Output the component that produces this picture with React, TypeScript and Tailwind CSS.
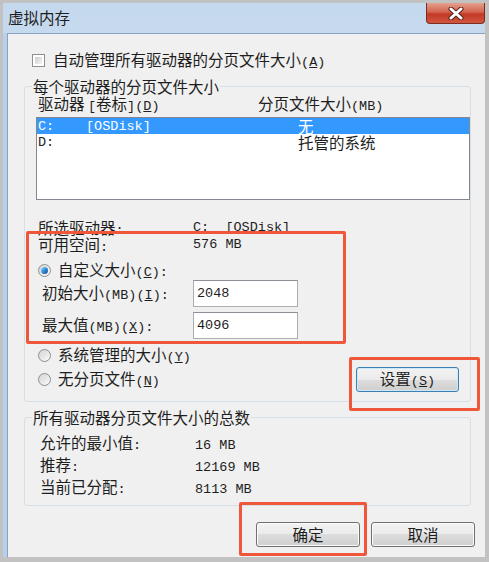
import type { ReactNode } from 'react';

// half-width run, like SimSun's ascii
const M = ({ children }: { children: ReactNode }) => (
  <span className="font-['Liberation_Mono',monospace] text-[13.5px]">{children}</span>
);

const Radio = ({ checked }: { checked?: boolean }) => (
  <span className="w-[13px] h-[13px] shrink-0 rounded-full border border-[#8e8f8f] bg-linear-to-br from-[#d4d4d4] to-[#fbfbfb] flex items-center justify-center">
    {checked && <span className="w-[7px] h-[7px] rounded-full bg-linear-to-br from-[#9adcff] via-[#2f8ad8] to-[#134f8f]" />}
  </span>
);

const Checkbox = () => (
  <span className="w-[13px] h-[13px] shrink-0 border border-[#8e8f8f] bg-white p-[2px]">
    <span className="block w-full h-full bg-linear-to-br from-[#cbcbcb] to-[#f6f6f6]" />
  </span>
);

const Btn = ({ children, focus, className = '' }: { children: ReactNode; focus?: boolean; className?: string }) => (
  <button
    className={`h-[25px] rounded-[3px] border ${
      focus ? 'border-[#3c7fb1] shadow-[inset_0_0_0_1px_#cfe8f7]' : 'border-[#707070] shadow-[inset_0_0_0_1px_#fbfbfb]'
    } bg-[linear-gradient(#f2f2f2,#ebebeb_50%,#dddddd_50%,#cfcfcf)] text-[#1e1e1e] leading-[17px] ${className}`}
  >
    {children}
  </button>
);

const CloseBtn = () => (
  <div className="w-[59px] h-[21px] rounded-b-[4px] border border-t-0 border-[#7d2c20] bg-[linear-gradient(#e3a08f,#d46550_45%,#c23a26_55%,#d2553f)] flex items-center justify-center">
    <svg width="16" height="13" viewBox="0 0 16 13">
      <path d="M3 2 L13 11 M13 2 L3 11" stroke="#5a2018" strokeWidth="5" strokeLinecap="round" />
      <path d="M3 2 L13 11 M13 2 L3 11" stroke="#ffffff" strokeWidth="3" strokeLinecap="round" />
    </svg>
  </div>
);

const Row = ({ label, value }: { label: ReactNode; value: ReactNode }) => (
  <div className="h-[22px] flex items-center pl-[15px]">
    <span className="w-[155px]">{label}</span>
    <span>{value}</span>
  </div>
);

export default function App() {
  return (
    <div className="relative w-[489px] h-[562px] bg-[#c2c2c2] pt-[3px] pl-[3px] pr-[4px] pb-[5px] font-['Noto_Sans_CJK_SC',sans-serif] text-[15.5px] leading-[17px] text-[#1e1e1e]">
      <div className="h-full flex flex-col bg-[linear-gradient(180deg,#c5d9ee,#dbe8f5)]">
        {/* title bar */}
        <div className="h-[30px] flex items-start justify-between">
          <span className="pl-[5px] pt-[6px]">虚拟内存</span>
          <CloseBtn />
        </div>

        <div className="flex-1 flex pl-[4px] bg-[linear-gradient(90deg,#b9d0ea,#a6c2e4)]">
          <div className="flex-1 flex flex-col bg-[#f0f0f0] border-l border-t border-[#8aa2c2]">
            <div className="mt-[18px] ml-[24px] h-[17px] flex items-center gap-[8px]">
              <Checkbox />
              <span>
                自动管理所有驱动器的分页文件大小<M>(<u>A</u>)</M>
              </span>
            </div>

            {/* per-drive group */}
            <fieldset className="mt-[9px] ml-[16px] w-[447px] border border-[#d5dfe5] rounded-[3px] pb-[9px]">
              <legend className="ml-[7px] px-[1px]">每个驱动器的分页文件大小</legend>
              <div className="flex pl-[13px] h-[17px]">
                <span className="w-[220px]">
                  驱动器 <M>[</M>卷标<M>](<u>D</u>)</M>
                </span>
                <span>
                  分页文件大小<M>(MB)</M>
                </span>
              </div>
              <div className="mt-[5px] ml-[11px] w-[434px] h-[83px] border border-[#828790] bg-white font-['Liberation_Mono',monospace]">
                <div className="h-[16px] flex items-center bg-[#3399ff] text-white">
                  <span className="w-[49px] pl-[1px] text-[13.5px]">C:</span>
                  <span className="w-[212px] text-[13.5px]">[OSDisk]</span>
                  <span className="font-['Noto_Sans_CJK_SC',sans-serif]">无</span>
                </div>
                <div className="h-[16px] flex items-center">
                  <span className="w-[261px] pl-[1px] text-[13.5px]">D:</span>
                  <span className="font-['Noto_Sans_CJK_SC',sans-serif]">托管的系统</span>
                </div>
              </div>

              <div className="mt-[19px] flex pl-[13px] h-[17px]">
                <span className="w-[155px]">
                  所选驱动器<M>:</M>
                </span>
                <M>C:&nbsp;&nbsp;[OSDisk]</M>
              </div>
              <div className="flex pl-[13px] h-[17px]">
                <span className="w-[155px]">
                  可用空间<M>:</M>
                </span>
                <M>576 MB</M>
              </div>

              <div className="mt-[9px] flex items-center gap-[7px] pl-[13px] h-[17px]">
                <Radio checked />
                <span>
                  自定义大小<M>(<u>C</u>):</M>
                </span>
              </div>
              <div className="mt-[1px] flex items-center pl-[17px] h-[27px]">
                <span className="w-[151px]">
                  初始大小<M>(MB)(<u>I</u>):</M>
                </span>
                <div className="w-[105px] h-[27px] border border-[#abadb3] border-t-[#8d9097] bg-white flex items-center pl-[3px]">
                  <M>2048</M>
                </div>
              </div>
              <div className="mt-[5px] flex items-center pl-[17px] h-[27px]">
                <span className="w-[151px]">
                  最大值<M>(MB)(<u>X</u>):</M>
                </span>
                <div className="w-[105px] h-[27px] border border-[#abadb3] border-t-[#8d9097] bg-white flex items-center pl-[3px]">
                  <M>4096</M>
                </div>
              </div>

              <div className="mt-[8px] flex">
                <div className="flex flex-col gap-[7px] pl-[13px]">
                  <div className="flex items-center gap-[7px] h-[17px]">
                    <Radio />
                    <span>
                      系统管理的大小<M>(<u>Y</u>)</M>
                    </span>
                  </div>
                  <div className="flex items-center gap-[7px] h-[17px]">
                    <Radio />
                    <span>
                      无分页文件<M>(<u>N</u>)</M>
                    </span>
                  </div>
                </div>
                <Btn focus className="ml-auto mr-[11px] mt-[20px] w-[103px] h-[24px]">
                  设置<M>(<u>S</u>)</M>
                </Btn>
              </div>
            </fieldset>

            {/* totals group */}
            <fieldset className="mt-[7px] ml-[16px] w-[447px] border border-[#d5dfe5] rounded-[3px] pb-[6px]">
              <legend className="ml-[7px] px-[1px]">所有驱动器分页文件大小的总数</legend>
              <div className="mt-[7px]">
                <Row label={<>允许的最小值<M>:</M></>} value={<M>16 MB</M>} />
                <Row label={<>推荐<M>:</M></>} value={<M>12169 MB</M>} />
                <Row label={<>当前已分配<M>:</M></>} value={<M>8113 MB</M>} />
              </div>
            </fieldset>

            <div className="mt-[16px] flex justify-end gap-[11px] pr-[10px]">
              <Btn className="w-[104px]">确定</Btn>
              <Btn className="w-[104px]">取消</Btn>
            </div>
          </div>
        </div>
      </div>

      {/* red annotation boxes */}
      <div className="absolute left-[26px] top-[231px] w-[320px] h-[113px] border-[3px] border-[#f0573a] rounded-[2px]" />
      <div className="absolute left-[349px] top-[357px] w-[131px] h-[54px] border-[3px] border-[#f0573a] rounded-[2px]" />
      <div className="absolute left-[239px] top-[502px] w-[128px] h-[54px] border-[3px] border-[#f0573a] rounded-[2px]" />
    </div>
  );
}
